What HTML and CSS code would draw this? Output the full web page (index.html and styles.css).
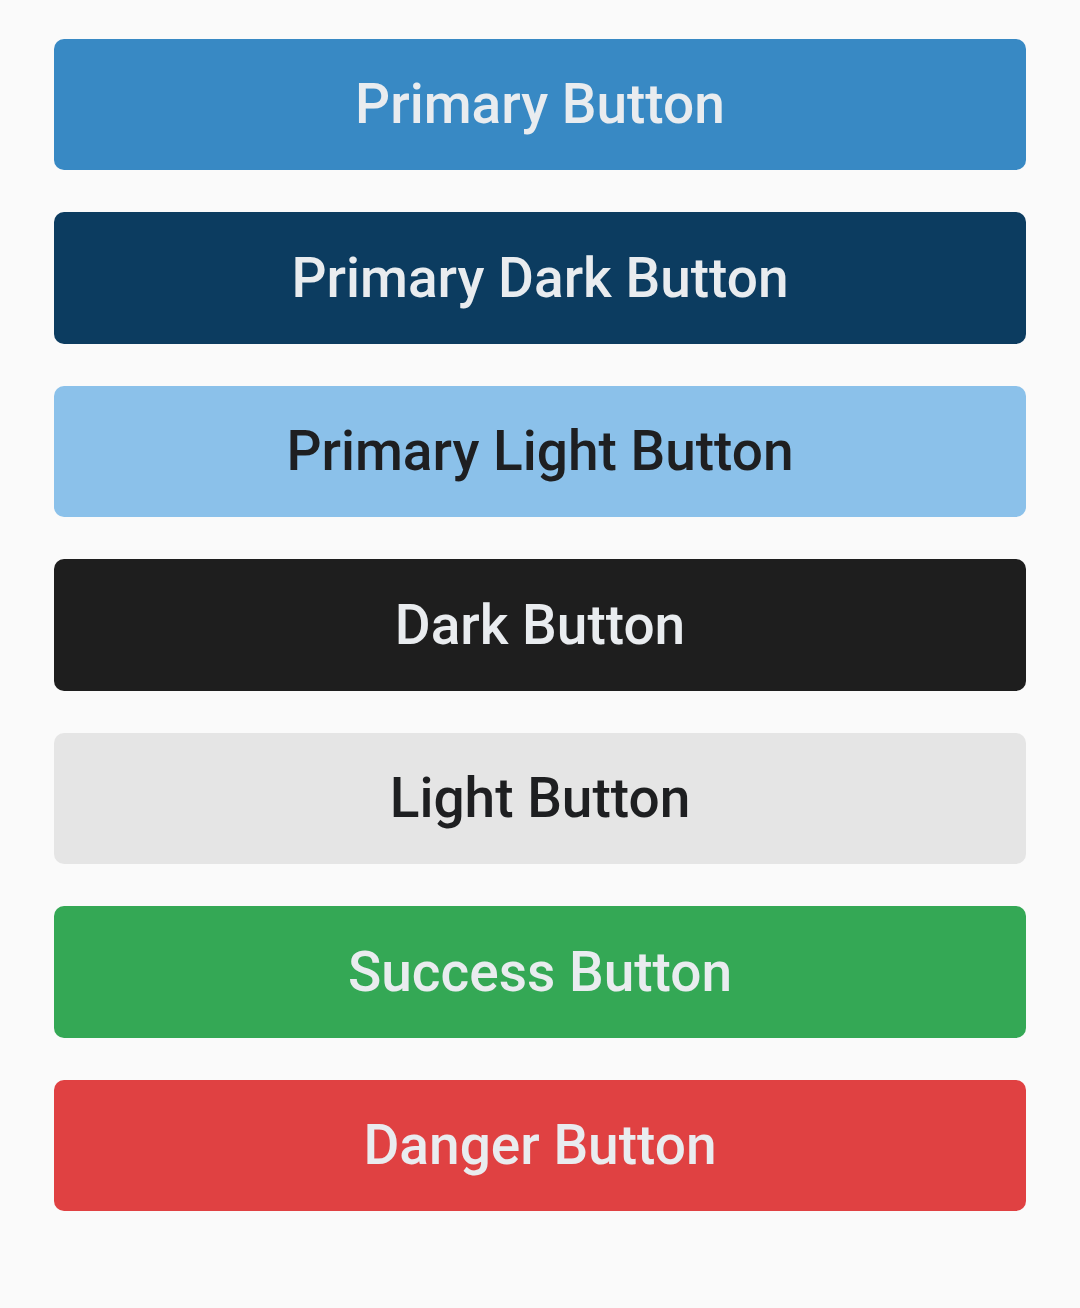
FILE: index.html
```html
<!DOCTYPE html>
<html>
<head>
<meta charset="utf-8">
<link rel="stylesheet" href="styles.css">
</head>
<body>
<div class="stack">
  <button class="btn btn-primary">Primary Button</button>
  <button class="btn btn-primary-dark">Primary Dark Button</button>
  <button class="btn btn-primary-light">Primary Light Button</button>
  <button class="btn btn-dark">Dark Button</button>
  <button class="btn btn-light">Light Button</button>
  <button class="btn btn-success">Success Button</button>
  <button class="btn btn-danger">Danger Button</button>
</div>
</body>
</html>
```
FILE: styles.css
```css
html, body {
  margin: 0;
  padding: 0;
  background: #fafafa;
}
body {
  width: 1080px;
  height: 1308px;
  font-family: Roboto, "Noto Sans", sans-serif;
}
.stack {
  display: flex;
  flex-direction: column;
  gap: 42px;
  padding: 38.5px 54px 0 54px;
}
.btn {
  height: 131.5px;
  border: none;
  border-radius: 10px;
  font-family: Roboto, sans-serif;
  font-weight: 500;
  font-size: 55px;
  color: #e9ecef;
  display: flex;
  align-items: center;
  justify-content: center;
  padding: 0;
}
.btn-primary { background: #3889c4; }
.btn-primary-dark { background: #0c3c60; }
.btn-primary-light { background: #8bc1ea; color: #1e1f21; }
.btn-dark { background: #1e1e1e; }
.btn-light { background: #e5e5e5; color: #1e1f21; }
.btn-success { background: #34a855; }
.btn-danger { background: #e04142; }
```
